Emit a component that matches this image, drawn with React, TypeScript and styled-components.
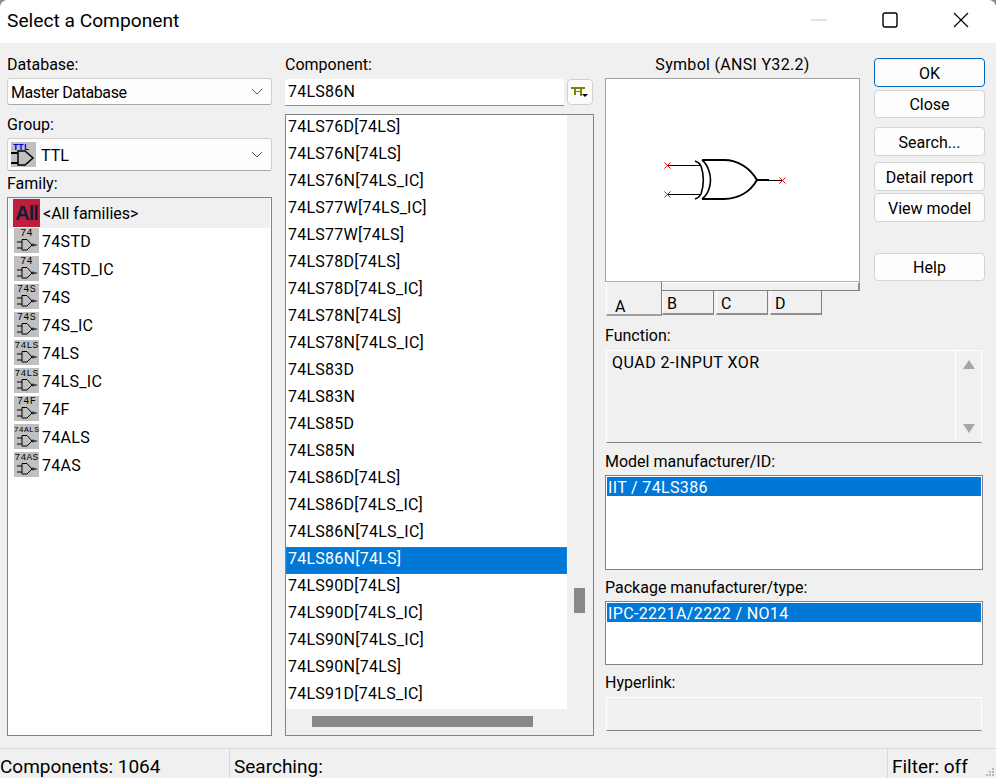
import styled, { createGlobalStyle } from "styled-components";

const families = [
    { name: "74STD", tag: "74" },
    { name: "74STD_IC", tag: "74" },
    { name: "74S", tag: "74S" },
    { name: "74S_IC", tag: "74S" },
    { name: "74LS", tag: "74LS" },
    { name: "74LS_IC", tag: "74LS" },
    { name: "74F", tag: "74F" },
    { name: "74ALS", tag: "74ALS" },
    { name: "74AS", tag: "74AS" },
];

const components = [
    "74LS76D[74LS]", "74LS76N[74LS]", "74LS76N[74LS_IC]", "74LS77W[74LS_IC]", "74LS77W[74LS]",
    "74LS78D[74LS]", "74LS78D[74LS_IC]", "74LS78N[74LS]", "74LS78N[74LS_IC]", "74LS83D",
    "74LS83N", "74LS85D", "74LS85N", "74LS86D[74LS]", "74LS86D[74LS_IC]", "74LS86N[74LS_IC]",
    "74LS86N[74LS]", "74LS90D[74LS]", "74LS90D[74LS_IC]", "74LS90N[74LS_IC]", "74LS90N[74LS]",
    "74LS91D[74LS_IC]",
];

const GlobalStyle = createGlobalStyle`
    html, body {
        margin: 0;
        padding: 0;
        background: #8c8c8c;
    }
    * {
        box-sizing: border-box;
    }
`;

const Window = styled.div`
    width: 996px;
    height: 778px;
    position: relative;
    display: flex;
    flex-direction: column;
    overflow: hidden;
    background: #f0f0f0;
    border-top-left-radius: 8px;
    border-top-right-radius: 8px;
    font-family: Roboto, "Noto Sans", sans-serif;
    font-size: 16px;
    line-height: 24px;
    color: #000;
`;

const TitleBar = styled.div`
    height: 43px;
    flex: none;
    display: flex;
    align-items: center;
    background: #fff;
    padding-left: 7px;
`;

const Title = styled.div`
    flex: 1;
    font-size: 19.2px;
    padding-bottom: 2px;
`;

const WindowButton = styled.div<{ $width: number }>`
    width: ${(p) => p.$width}px;
    display: flex;
    justify-content: center;
    padding-bottom: 3px;
`;

const Body = styled.div`
    flex: 1;
    min-height: 0;
    display: grid;
    grid-template-columns: 278px 320px 380px;
    padding: 10px 0 12px 7px;
`;

const Column = styled.div<{ $gutter?: number }>`
    display: flex;
    flex-direction: column;
    min-height: 0;
    padding-right: ${(p) => p.$gutter ?? 0}px;
`;

const Label = styled.div<{ $top?: number; $bottom?: number; $center?: boolean }>`
    height: 22px;
    margin-top: ${(p) => p.$top ?? 0}px;
    margin-bottom: ${(p) => p.$bottom ?? 3}px;
    text-align: ${(p) => (p.$center ? "center" : "left")};
    letter-spacing: ${(p) => (p.$center ? "0.3px" : "0")};
    white-space: nowrap;
`;

const Select = styled.div<{ $height: number }>`
    height: ${(p) => p.$height}px;
    display: flex;
    align-items: center;
    gap: 5px;
    padding: 0 8px 0 3px;
    background: #fdfdfd;
    border: 1px solid #d0d0d0;
    border-bottom-color: #a8a8a8;
    border-radius: 3px;
`;

const SelectText = styled.span<{ $tight?: boolean }>`
    flex: 1;
    padding-top: 2px;
    letter-spacing: ${(p) => (p.$tight ? "-0.4px" : "0")};
`;

const FamilyList = styled.div`
    flex: 1;
    padding: 0 1px;
    background: #fff;
    border: 1px solid #82828a;
`;

const AllRow = styled.div`
    height: 30px;
    display: flex;
    align-items: center;
    gap: 3px;
    padding-left: 4px;
    background: #f0f0f0;
`;

const AllLabel = styled.span`
    padding-top: 2px;
`;

const AllBadge = styled.div`
    width: 27px;
    height: 28px;
    display: flex;
    align-items: center;
    justify-content: center;
    background: #c01c3c;
    color: #0b2038;
    font-family: "Liberation Sans", sans-serif;
    font-size: 20px;
    font-weight: 700;
    letter-spacing: -1px;
`;

const FamilyRow = styled.div`
    height: 28px;
    display: flex;
    align-items: flex-start;
    gap: 3px;
    padding-left: 5px;
    line-height: 28px;
    letter-spacing: 0.3px;
`;

const InputRow = styled.div`
    display: flex;
    gap: 3px;
    margin-top: 1px;
`;

const Input = styled.div`
    width: 279px;
    height: 27px;
    padding: 0 3px;
    line-height: 26px;
    letter-spacing: 0.25px;
    background: #fff;
    border-bottom: 1px solid #8c8c8c;
    border-radius: 3px 3px 0 0;
`;

const FilterButton = styled.div`
    width: 26px;
    height: 26px;
    display: flex;
    align-items: center;
    justify-content: center;
    background: #fbfbfb;
    border: 1px solid #d0d0d0;
    border-radius: 4px;
`;

const ComponentList = styled.div`
    flex: 1;
    margin-top: 8px;
    display: grid;
    grid-template-columns: 281px 1fr;
    grid-template-rows: 594px 1fr;
    border: 1px solid #82828a;
`;

const Rows = styled.div`
    grid-column: 1;
    grid-row: 1;
    background: #fff;
`;

const Row = styled.div<{ $selected?: boolean }>`
    height: 27px;
    padding-left: 2px;
    letter-spacing: 0.25px;
    white-space: nowrap;
    background: ${(p) => (p.$selected ? "#0078d7" : "transparent")};
    color: ${(p) => (p.$selected ? "#fff" : "#000")};
    outline: ${(p) => (p.$selected ? "1px dotted #b06a1c" : "none")};
    outline-offset: -1px;
`;

const VerticalTrack = styled.div`
    grid-column: 2;
    grid-row: 1 / 3;
    padding: 473px 0 0 7px;
`;

const VerticalThumb = styled.div`
    width: 11px;
    height: 25px;
    background: #888;
`;

const HorizontalTrack = styled.div`
    grid-column: 1;
    grid-row: 2;
    padding: 7px 0 0 26px;
`;

const HorizontalThumb = styled.div`
    width: 221px;
    height: 11px;
    background: #888;
`;

const TopRight = styled.div`
    display: flex;
    gap: 14px;
`;

const SymbolColumn = styled.div`
    width: 255px;
`;

const SymbolBox = styled.div`
    height: 204px;
    background: #fff;
    border: 1px solid #a0a0a0;
    border-bottom-color: #b0b0b0;

    svg {
        display: block;
    }
`;

const TabRow = styled.div`
    height: 35px;
    display: flex;
    padding-left: 1px;
`;

const ActiveTab = styled.div`
    width: 56px;
    height: 34px;
    padding: 13px 0 0 8px;
    border-left: 1px solid #fff;
    border-bottom: 2px solid #a0a0a0;
    border-right: 1px solid #808080;
`;

const TabSide = styled.div`
    flex: 1;
    display: flex;
    flex-direction: column;
`;

const TabStrip = styled.div`
    height: 9px;
    background: #f0f0f0;
    border-top: 1px solid #fff;
    border-right: 2px solid #909090;
    border-bottom: 1px solid #808080;
`;

const TabList = styled.div`
    display: flex;
    gap: 2px;
`;

const Tab = styled.div`
    width: 52px;
    height: 24px;
    padding: 0 0 0 4px;
    line-height: 26px;
    overflow: hidden;
    border-bottom: 2px solid #909090;
    border-right: 1px solid #808080;
    border-left: 1px solid #fff;
`;

const ButtonColumn = styled.div`
    width: 111px;
    display: flex;
    flex-direction: column;
    padding-top: 5px;
`;

const Button = styled.div<{ $height: number; $gap?: number; $primary?: boolean }>`
    height: ${(p) => p.$height}px;
    margin-top: ${(p) => p.$gap ?? 0}px;
    padding-top: 2px;
    display: flex;
    align-items: center;
    justify-content: center;
    background: #fdfdfd;
    border: 1px solid ${(p) => (p.$primary ? "#0067c0" : "#d4d4d4")};
    border-radius: 4px;
    white-space: nowrap;
`;

const Fields = styled.div`
    width: 378px;
    display: flex;
    flex-direction: column;
`;

const ReadOnlyBox = styled.div<{ $height: number }>`
    height: ${(p) => p.$height}px;
    margin: 1px 1px 0;
    display: flex;
    border: 1px solid #fff;
    border-bottom: 1px solid #808080;
    background: #f0f0f0;
`;

const FunctionText = styled.div`
    flex: 1;
    padding: 0 0 0 5px;
    letter-spacing: 0.5px;
`;

const FunctionScroll = styled.div`
    width: 26px;
    display: flex;
    flex-direction: column;
    justify-content: space-between;
    align-items: center;
    padding: 9px 0 9px;
    border-left: 1px solid #fff;
`;

const PickList = styled.div<{ $height: number }>`
    height: ${(p) => p.$height}px;
    padding: 1px;
    background: #fff;
    border: 1px solid #82828a;
`;

const PickRow = styled.div`
    height: 19px;
    padding-left: 1px;
    line-height: 21px;
    letter-spacing: 0.35px;
    background: #0078d7;
    color: #fff;
    white-space: nowrap;
`;

const StatusBar = styled.div`
    height: 30px;
    flex: none;
    display: grid;
    grid-template-columns: 229px 658px 1fr;
    border-top: 1px solid #d8d8d8;
    overflow: hidden;
`;

const StatusCell = styled.div<{ $divider?: boolean }>`
    padding: 6px 0 0 ${(p) => (p.$divider ? 4 : 0)}px;
    border-left: ${(p) => (p.$divider ? "1px solid #d8d8d8" : "none")};
    font-size: 19px;
    white-space: nowrap;
`;

const Grip = styled.svg`
    position: absolute;
    right: 2px;
    bottom: 2px;
`;

// the label shrinks with its length so it stays inside the 25px tile
const tagSize = (tag: string) => (tag.length > 4 ? 8 : tag.length > 3 ? 9.5 : 10);

const Gate = ({ tag }: { tag: string }) => (
    <svg width="25" height="25" viewBox="0 0 25 25" style={{ flex: "none" }}>
        <rect width="25" height="25" fill="#c0c0c0" />
        <text x="12.5" y="8" textAnchor="middle" fontSize={tagSize(tag)} fontFamily="Liberation Mono, monospace" fill="#000">{tag}</text>
        <path d="M8 11.5h5l5 5.5-5 5H8zM3 14h5M3 20h5M20 17h3" fill="none" stroke="#000" strokeWidth="1" />
        <circle cx="19" cy="17" r="1" fill="none" stroke="#000" strokeWidth="1" />
    </svg>
);

const GroupIcon = () => (
    <svg width="25" height="25" viewBox="0 0 25 25" style={{ flex: "none" }}>
        <rect width="25" height="25" fill="#c0c0c0" />
        <text x="10" y="7.5" textAnchor="middle" fontSize="9" fontWeight="700" fontFamily="Liberation Mono, monospace" fill="#0000e0">TTL</text>
        <path d="M7 9h7l8 7-8 7H7z" fill="none" stroke="#000" strokeWidth="1.5" />
        <path d="M0 11h7M0 21h7" stroke="#000" strokeWidth="2" />
    </svg>
);

const Chevron = () => (
    <svg width="12" height="7" viewBox="0 0 12 7">
        <polyline points="1,1 6,6 11,1" fill="none" stroke="#5a5a5a" strokeWidth="1" />
    </svg>
);

const FilterIcon = () => (
    <svg width="18" height="12" viewBox="0 0 18 12">
        <path d="M0 1h14v2H0zM3 3h2v6H3zM9 3h2v7H9zM5 5h4v1H5z" fill="#808000" />
        <path d="M11 8h6l-3 3z" fill="#000" />
    </svg>
);

const XorSymbol = () => (
    <svg width="253" height="202" viewBox="606 79 253 202">
        <g fill="none" stroke="#000">
            <path d="M667 165.5h33M667 194.5h33M768 180.5h14" strokeWidth="1" />
            <path d="M757 180h12" strokeWidth="2" />
            <path d="M695 161c3 1 5 3 6 5 3 9 3 19 0 28-1 2-3 4-6 5" strokeWidth="1.6" />
            <path d="M702 160c4 3 6 8 7 11 2 6 2 12 0 18-1 3-3 7-7 10" strokeWidth="1.6" />
            <path d="M702 160h22c14 0 26 8 33 20-7 12-19 19-33 19h-22" strokeWidth="2" />
        </g>
        <path d="M664.5 162.5l6 6M670.5 162.5l-6 6M664.5 191.5l6 6M670.5 191.5l-6 6M779.5 177.5l6 6M785.5 177.5l-6 6" stroke="#e01010" strokeWidth="1" fill="none" />
    </svg>
);

const Arrow = ({ up }: { up?: boolean }) => (
    <svg width="12" height="9" viewBox="0 0 12 9">
        <path d={up ? "M6 0l6 9H0z" : "M6 9l6-9H0z"} fill="#a6a6a6" />
    </svg>
);

export default function App() {
    return (
        <Window>
            <GlobalStyle />
            <TitleBar>
                <Title>Select a Component</Title>
                <WindowButton $width={70}>
                    <svg width="16" height="2" viewBox="0 0 16 2"><path d="M0 1h16" stroke="#c4c4c4" /></svg>
                </WindowButton>
                <WindowButton $width={71}>
                    <svg width="16" height="16" viewBox="0 0 16 16"><rect x="1" y="1" width="14" height="14" rx="2" fill="none" stroke="#000" strokeWidth="1.4" /></svg>
                </WindowButton>
                <WindowButton $width={71}>
                    <svg width="16" height="16" viewBox="0 0 16 16"><path d="M1 1l14 14M15 1L1 15" stroke="#000" strokeWidth="1.2" /></svg>
                </WindowButton>
            </TitleBar>

            <Body>
                <Column $gutter={13}>
                    <Label>Database:</Label>
                    <Select $height={27}>
                        <SelectText $tight>Master Database</SelectText>
                        <Chevron />
                    </Select>
                    <Label $top={8}>Group:</Label>
                    <Select $height={33}>
                        <GroupIcon />
                        <SelectText>TTL</SelectText>
                        <Chevron />
                    </Select>
                    <Label $top={1}>Family:</Label>
                    <FamilyList>
                        <AllRow>
                            <AllBadge>All</AllBadge>
                            <AllLabel>&lt;All families&gt;</AllLabel>
                        </AllRow>
                        {families.map((f) => (
                            <FamilyRow key={f.name}>
                                <Gate tag={f.tag} />
                                <span>{f.name}</span>
                            </FamilyRow>
                        ))}
                    </FamilyList>
                </Column>

                <Column $gutter={11}>
                    <Label>Component:</Label>
                    <InputRow>
                        <Input>74LS86N</Input>
                        <FilterButton><FilterIcon /></FilterButton>
                    </InputRow>
                    <ComponentList>
                        <Rows>
                            {components.map((c, i) => (
                                <Row key={c} $selected={i === 16}>{c}</Row>
                            ))}
                        </Rows>
                        <VerticalTrack><VerticalThumb /></VerticalTrack>
                        <HorizontalTrack><HorizontalThumb /></HorizontalTrack>
                    </ComponentList>
                </Column>

                <Column>
                    <TopRight>
                        <SymbolColumn>
                            <Label $center>Symbol (ANSI Y32.2)</Label>
                            <SymbolBox><XorSymbol /></SymbolBox>
                            <TabRow>
                                <ActiveTab>A</ActiveTab>
                                <TabSide>
                                    <TabStrip />
                                    <TabList>
                                        <Tab>B</Tab>
                                        <Tab>C</Tab>
                                        <Tab>D</Tab>
                                    </TabList>
                                </TabSide>
                            </TabRow>
                        </SymbolColumn>
                        <ButtonColumn>
                            <Button $height={29} $primary>OK</Button>
                            <Button $height={28} $gap={3}>Close</Button>
                            <Button $height={29} $gap={9}>Search...</Button>
                            <Button $height={29} $gap={6}>Detail report</Button>
                            <Button $height={29} $gap={2}>View model</Button>
                            <Button $height={28} $gap={31}>Help</Button>
                        </ButtonColumn>
                    </TopRight>
                    <Fields>
                        <Label $top={7}>Function:</Label>
                        <ReadOnlyBox $height={93}>
                            <FunctionText>QUAD 2-INPUT XOR</FunctionText>
                            <FunctionScroll>
                                <Arrow up />
                                <Arrow />
                            </FunctionScroll>
                        </ReadOnlyBox>
                        <Label $top={7}>Model manufacturer/ID:</Label>
                        <PickList $height={95}>
                            <PickRow>IIT / 74LS386</PickRow>
                        </PickList>
                        <Label $top={6}>Package manufacturer/type:</Label>
                        <PickList $height={64}>
                            <PickRow>IPC-2221A/2222 / NO14</PickRow>
                        </PickList>
                        <Label $top={6}>Hyperlink:</Label>
                        <ReadOnlyBox $height={34} />
                    </Fields>
                </Column>
            </Body>

            <StatusBar>
                <StatusCell>Components: 1064</StatusCell>
                <StatusCell $divider>Searching:</StatusCell>
                <StatusCell $divider>Filter: off</StatusCell>
            </StatusBar>
            <Grip width="8" height="8" viewBox="0 0 8 8">
                <path d="M6 0h2v2H6zM3 3h2v2H3zM6 3h2v2H6zM0 6h2v2H0zM3 6h2v2H3zM6 6h2v2H6z" fill="#b8b8b8" />
            </Grip>
        </Window>
    );
}
